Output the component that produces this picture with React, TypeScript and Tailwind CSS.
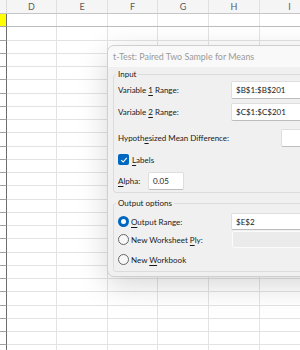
import type { ReactNode } from 'react'

const cols = [
  { name: 'D', w: 'w-[50px]' },
  { name: 'E', w: 'w-[51px]' },
  { name: 'F', w: 'w-[50px]' },
  { name: 'G', w: 'w-[51px]' },
  { name: 'H', w: 'w-[51px]' },
  { name: 'I', w: 'w-[60px]' },
]

const rows = Array.from({ length: 26 }, (_, i) => i)

function Key({ children }: { children: ReactNode }) {
  return <span className="underline underline-offset-[1.5px] decoration-[0.8px]">{children}</span>
}

function Field({ value, className = '', disabled = false }: { value?: string; className?: string; disabled?: boolean }) {
  return (
    <div
      className={`h-full flex items-center px-[4px] text-[8px] text-[#1a1a1a] border ${
        disabled
          ? 'bg-[#ebebeb] border-[#fbfbfb]'
          : 'bg-white border-[#dedede] border-b-[#bdbdbd]'
      } rounded-[2px] ${className}`}
    >
      {value}
    </div>
  )
}

function Radio({ checked = false }: { checked?: boolean }) {
  return checked ? (
    <span className="w-[11px] h-[11px] rounded-full bg-[#0067c0] flex items-center justify-center shrink-0">
      <span className="w-[5px] h-[5px] rounded-full bg-white" />
    </span>
  ) : (
    <span className="w-[11px] h-[11px] rounded-full border border-[#666666] bg-[#f7f7f7] shrink-0" />
  )
}

export default function App() {
  return (
    <div
      className="relative w-[300px] h-[350px] overflow-hidden bg-white"
      style={{ fontFamily: 'Lato, "Noto Sans", sans-serif' }}
    >
      {/* sheet */}
      <div className="flex flex-col">
        <div className="flex h-[14px] bg-[#f5f5f5] border-b border-[#c6c6c6]">
          <div className="w-[7px] shrink-0 border-r border-[#dcdcdc]" />
          {cols.map((c) => (
            <div
              key={c.name}
              className={`${c.w} shrink-0 border-r border-[#e0e0e0] text-[9px] leading-[13px] text-[#5c5c5c] text-center`}
            >
              {c.name}
            </div>
          ))}
        </div>
        {rows.map((r) => (
          <div
            key={r}
            className={`flex h-[13.25px] border-b ${r === 0 ? 'border-[#bdbdbd]' : 'border-[#e3e3e3]'}`}
          >
            <div
              className={`w-[7px] shrink-0 border-r border-[#6e6e6e] ${
                r === 0 ? 'bg-[#ffff00]' : 'bg-white'
              } -mb-px border-b border-b-[#a3a3a3]`}
            />
            {cols.map((c) => (
              <div key={c.name} className={`${c.w} shrink-0 border-r border-[#e3e3e3]`} />
            ))}
          </div>
        ))}
      </div>

      {/* dialog */}
      <div className="absolute left-[107px] top-[45px] w-[240px] h-[232px] rounded-[7px] border border-[#cfcfcf] bg-[#f0f0f0] overflow-hidden shadow-[0_8px_30px_rgba(0,0,0,0.16)]">
        <div className="h-[21px] bg-[#f9f9f9] flex items-center pl-[5px] text-[8.9px] text-[#9a9a9a]">
          t-Test: Paired Two Sample for Means
        </div>
        <div className="px-[5px] text-[8px] text-[#1a1a1a]">
          <fieldset className="border border-[#dcdcdc] rounded-[3px] pl-[4px] pb-[2px]">
            <legend className="px-[2px] -ml-[2px] leading-[14px]">Input</legend>
            <div className="flex h-[18px] items-center">
              <div className="w-[113px]">
                Variable <Key>1</Key> Range:
              </div>
              <Field value="$B$1:$B$201" className="w-[100px]" />
            </div>
            <div className="flex h-[18px] items-center mt-[4px]">
              <div className="w-[113px]">
                Variable <Key>2</Key> Range:
              </div>
              <Field value="$C$1:$C$201" className="w-[100px]" />
            </div>
            <div className="flex h-[18px] items-center mt-[8px]">
              <div className="w-[163px]">
                Hypoth<Key>e</Key>sized Mean Difference:
              </div>
              <Field className="w-[60px]" />
            </div>
            <div className="flex h-[13px] items-center gap-[3px] mt-[6px]">
              <span className="w-[11px] h-[11px] rounded-[2px] bg-[#0067c0] flex items-center justify-center">
                <svg width="8" height="8" viewBox="0 0 8 8">
                  <path d="M1.2 4.2 L3.2 6 L6.8 1.8" fill="none" stroke="white" strokeWidth="1.1" />
                </svg>
              </span>
              <span>
                <Key>L</Key>abels
              </span>
            </div>
            <div className="flex h-[18px] items-center mt-[6px]">
              <div className="w-[30px]">
                <Key>A</Key>lpha:
              </div>
              <Field value="0.05" className="w-[36px]" />
            </div>
          </fieldset>

          <fieldset className="border border-[#dcdcdc] rounded-[3px] pl-[4px] pb-[3px] mt-[3px]">
            <legend className="px-[2px] -ml-[2px] leading-[14px]">Output options</legend>
            <div className="flex h-[17px] items-center mt-[3px]">
              <div className="w-[113px] flex items-center gap-[2px]">
                <Radio checked />
                <span>
                  <Key>O</Key>utput Range:
                </span>
              </div>
              <Field value="$E$2" className="w-[100px]" />
            </div>
            <div className="flex h-[17px] items-center mt-[1px]">
              <div className="w-[114px] flex items-center gap-[2px]">
                <Radio />
                <span>
                  New Worksheet <Key>P</Key>ly:
                </span>
              </div>
              <Field disabled className="w-[100px]" />
            </div>
            <div className="flex h-[17px] items-center mt-[3px] gap-[2px]">
              <Radio />
              <span>
                New <Key>W</Key>orkbook
              </span>
            </div>
          </fieldset>
        </div>
      </div>
    </div>
  )
}
